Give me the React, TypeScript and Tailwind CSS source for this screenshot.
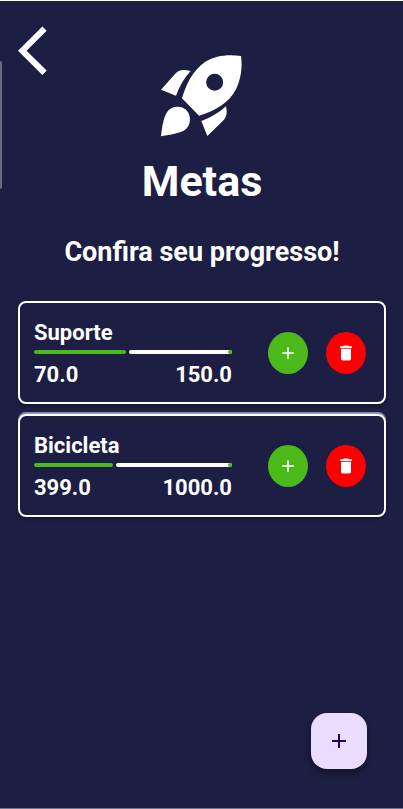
type Goal = { name: string; saved: number; target: number };

const goals: Goal[] = [
  { name: "Suporte", saved: 70, target: 150 },
  { name: "Bicicleta", saved: 399, target: 1000 },
];

function PlusIcon({ className }: { className: string }) {
  return (
    <svg viewBox="0 0 24 24" className={className} fill="currentColor" aria-hidden="true">
      <path d="M19 13h-6v6h-2v-6H5v-2h6V5h2v6h6v2z" />
    </svg>
  );
}

function TrashIcon() {
  return (
    <svg viewBox="0 0 24 24" className="size-5" fill="currentColor" aria-hidden="true">
      <path d="M6 19c0 1.100.9 2 2 2h8c1.100 0 2-.9 2-2V7H6v12zM19 4h-3.500l-1-1h-5l-1 1H5v2h14V4z" />
    </svg>
  );
}

function RocketIcon() {
  return (
    <svg viewBox="60 42 252 252" className="size-21" fill="currentColor" aria-hidden="true">
      <path
        fillRule="evenodd"
        d="M303 48C308 82 303 116 288 148C268 188 225 214 177 227L126 175C138 133 158 91 196 65C228 46 265 42 303 48ZM224 101A25.500 25.500 0 1 0 224 152A25.500 25.500 0 1 0 224 101Z"
      />
      <path d="M63 149L103 104C113 92 123 89 135 90L152 93C132 114 118 140 108 167Z" />
      <path d="M258 199C261 214 262 227 252 239L202 288L184 243C211 233 236 219 258 199Z" />
      <path d="M63 289C66 263 70 232 82 215C93 199 119 196 135 207C152 219 155 247 141 264C129 279 95 283 63 289Z" />
    </svg>
  );
}

function GoalCard({ goal }: { goal: Goal }) {
  const percent = (goal.saved / goal.target) * 100;
  return (
    <li className="flex items-center justify-between rounded-lg border-2 border-white py-3.5 pr-[18px] pl-3.5 shadow-[0_2px_3px_rgba(0,0,0,0.3)] not-first:shadow-[0_-2px_0_-1px_#9a9bb5,0_-2px_0_#8b8ca8,0_2px_3px_rgba(0,0,0,0.3)]">
      <div className="w-[198px]">
        <h3 className="text-[22px] leading-8 font-bold">{goal.name}</h3>
        <div
          role="progressbar"
          aria-label={goal.name}
          aria-valuenow={goal.saved}
          aria-valuemax={goal.target}
          className="mt-px mb-2 flex h-1 gap-[3px]"
        >
          <div className="shrink-0 rounded-full bg-[#4cb91a]" style={{ width: `${percent}%` }} />
          <div className="flex grow justify-end rounded-full bg-white">
            <div className="size-1 rounded-full bg-[#4cb91a]" />
          </div>
        </div>
        <div className="flex justify-between text-[22px] leading-[26px] font-bold">
          <span>{goal.saved.toFixed(1)}</span>
          <span>{goal.target.toFixed(1)}</span>
        </div>
      </div>
      <div className="flex gap-[18px]">
        <button
          aria-label="Adicionar valor"
          className="flex h-[42px] w-10 items-center justify-center rounded-[50%] bg-[#4cb91a]"
        >
          <PlusIcon className="size-5" />
        </button>
        <button
          aria-label="Excluir meta"
          className="flex h-[42px] w-10 items-center justify-center rounded-[50%] bg-[#ff0000]"
        >
          <TrashIcon />
        </button>
      </div>
    </li>
  );
}

export default function App() {
  return (
    <main className="relative flex min-h-screen flex-col border-t border-b border-t-white border-b-[#77738a] bg-[#1c1e43] pr-[17px] pb-[39px] pl-[18px] font-['Roboto',sans-serif] text-white">
      <div className="absolute top-[60px] left-0 h-32 w-0.5 rounded-r-sm bg-[#6b6c80]" />

      <header className="grid grid-cols-[1fr_auto_1fr] items-start pt-[25px]">
        <button aria-label="Voltar" className="justify-self-start">
          <svg viewBox="53 77 88 148" className="h-[49px] w-[29px]" fill="currentColor" aria-hidden="true">
            <path d="M53 152L127 78L140 91L79 152L140 212L127 225Z" />
          </svg>
        </button>
        <div className="pt-7">
          <RocketIcon />
        </div>
      </header>

      <h1 className="mt-[15px] text-center text-[43px] leading-14 font-bold">Metas</h1>
      <h2 className="mt-[23px] text-center text-[27px] leading-10 font-bold">Confira seu progresso!</h2>

      <ul className="mt-[29px] flex flex-col gap-2.5">
        {goals.map((goal) => (
          <GoalCard key={goal.name} goal={goal} />
        ))}
      </ul>

      <button
        aria-label="Nova meta"
        className="mt-auto mr-[19px] flex size-14 items-center justify-center self-end rounded-2xl bg-[#e9dcfd] text-[#250059] shadow-[0_4px_7px_rgba(0,0,0,0.35)]"
      >
        <PlusIcon className="size-6" />
      </button>
    </main>
  );
}
